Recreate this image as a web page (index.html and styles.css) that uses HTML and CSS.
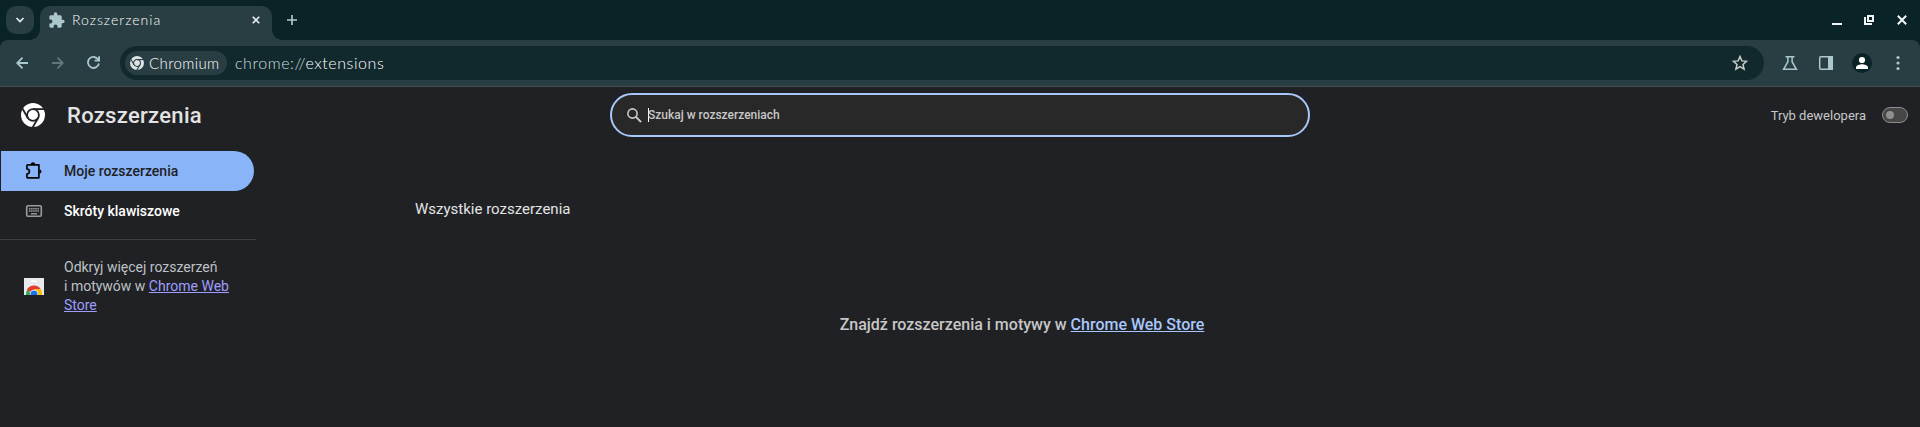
FILE: index.html
```html
<!DOCTYPE html>
<html lang="pl">
<head>
<meta charset="utf-8">
<title>Rozszerzenia</title>
<link rel="stylesheet" href="styles.css">
</head>
<body>
<svg width="0" height="0" class="defs">
  <symbol id="chromium" viewBox="0 0 24 24">
    <circle cx="12" cy="12" r="12" fill="currentColor"/>
    <circle cx="12" cy="12" r="5.9" fill="none" stroke="var(--gap)" stroke-width="1.8"/>
    <g stroke="var(--gap)" stroke-width="1.8" fill="none"><path d="M12 6.1H23.5"/><path d="M6.9 15L1.1 5"/><path d="M17.1 15L11.3 25"/></g>
  </symbol>
</svg>
<header class="tabstrip">
  <button class="tab-search"><svg width="10" height="10" viewBox="0 0 10 10"><path d="M1.500 3L5 6.500L8.500 3" fill="none" stroke="#e4ecec" stroke-width="1.700"/></svg></button>
  <div class="tab">
    <svg width="16" height="16" viewBox="1.500 0.500 22 22"><path d="M20.500 11H19V7c0-1.100-.9-2-2-2h-4V3.500a2.500 2.500 0 0 0-5 0V5H4c-1.100 0-2 .9-2 2v3.800h1.500a2.700 2.700 0 0 1 0 5.400H2V20c0 1.100.9 2 2 2h3.800v-1.500a2.700 2.700 0 0 1 5.400 0V22H17c1.100 0 2-.9 2-2v-4h1.500a2.500 2.500 0 0 0 0-5z" fill="#a9c7cc"/></svg>
    <span class="tab-title">Rozszerzenia</span>
    <svg class="tab-close" width="8" height="8" viewBox="0 0 8 8"><path d="M.7.7l6.600 6.600M7.300.7L.7 7.300" stroke="#e4ecec" stroke-width="1.600"/></svg>
  </div>
  <svg class="plus" width="10" height="10" viewBox="0 0 10 10"><path d="M5 0v10M0 5h10" stroke="#b6cbce" stroke-width="1.600"/></svg>
  <div class="window-controls">
    <svg width="10" height="10" viewBox="0 0 10 10"><path d="M0 9h10" stroke="#f1f5f5" stroke-width="2"/></svg>
    <svg width="10" height="10" viewBox="0 0 10 10"><path d="M4 1h5v5H4zM1 2v7h7" fill="none" stroke="#f1f5f5" stroke-width="2"/></svg>
    <svg width="10" height="10" viewBox="0 0 10 10"><path d="M.8.8l8.400 8.400M9.200.8L.8 9.200" stroke="#f1f5f5" stroke-width="2"/></svg>
  </div>
</header>
<div class="toolbar">
  <div class="nav-buttons">
    <svg width="12" height="12" viewBox="0 0 12 12"><path d="M12 6H1.200M6.500.7L1.200 6l5.300 5.300" fill="none" stroke="#a9c7cc" stroke-width="1.800"/></svg>
    <svg width="12" height="12" viewBox="0 0 12 12"><path d="M0 6h10.800M5.500.7L10.800 6l-5.300 5.300" fill="none" stroke="#657679" stroke-width="1.800"/></svg>
    <svg width="13" height="13" viewBox="0 0 13 13"><path d="M11.200 3.600A5.500 5.500 0 1 0 11.900 7.500M12.100 .3V4.700H7.600" fill="none" stroke="#a9c7cc" stroke-width="1.800"/></svg>
  </div>
  <div class="omnibox">
    <div class="chip"><svg class="chip-logo" width="14" height="14"><use href="#chromium"/></svg><span>Chromium</span></div>
    <div class="url"><span>chrome://</span>extensions</div>
    <svg class="star" width="16" height="16" viewBox="0 0 16 16"><path d="M8 1.500l1.850 4.400 4.750.4-3.600 3.100 1.100 4.700L8 11.600l-4.100 2.500L5 9.400 1.400 6.300l4.750-.4z" fill="none" stroke="#c9cecc" stroke-width="1.500"/></svg>
  </div>
  <div class="actions">
    <svg width="16" height="16" viewBox="0 0 16 16"><path d="M3.500 1.700h9M5.900 1.700v5L1.600 14.300h12.800L10.100 6.700v-5" fill="none" stroke="#a9c7cc" stroke-width="1.500"/></svg>
    <svg width="16" height="16" viewBox="0 0 16 16"><rect x="1.700" y="1.700" width="12.600" height="12.600" rx="1" fill="none" stroke="#a9c7cc" stroke-width="1.500"/><path d="M10 1h5v14h-5z" fill="#a9c7cc"/></svg>
    <svg width="20" height="20" viewBox="0 0 20 20"><circle cx="10" cy="10" r="10" fill="#0a2327"/><circle cx="10" cy="7" r="3.100" fill="#fff"/><path d="M4 16v-1.500c0-2.200 4-3.300 6-3.300s6 1.100 6 3.300V16z" fill="#fff"/></svg>
    <svg width="4" height="16" viewBox="0 0 4 16"><g fill="#a9c7cc"><circle cx="2" cy="2.500" r="1.600"/><circle cx="2" cy="8" r="1.600"/><circle cx="2" cy="13.500" r="1.600"/></g></svg>
  </div>
</div>
<div class="page">
  <div class="topbar">
    <svg class="logo" width="24" height="24"><use href="#chromium"/></svg>
    <h1>Rozszerzenia</h1>
    <div class="search">
      <svg width="15" height="15" viewBox="0 0 15 15"><circle cx="5.500" cy="5.500" r="4.600" fill="none" stroke="#c8c8c8" stroke-width="1.600"/><path d="M8.800 8.800l5.300 5.300" stroke="#c8c8c8" stroke-width="2"/></svg>
      <span class="caret"></span><span class="placeholder">Szukaj w rozszerzeniach</span>
    </div>
    <div class="dev"><span>Tryb dewelopera</span><span class="toggle"></span></div>
  </div>
  <div class="body">
    <nav class="sidebar">
      <a class="item active"><svg width="18" height="18" viewBox="0 0 18 18"><path d="M2.900 2.800h11v13h-11q-1 0-1-1v-2.700q2.500-.4 2.500-2.600T1.900 6.900V3.800q0-1 1-1z" fill="none" stroke="#050505" stroke-width="1.700" stroke-linejoin="round"/><path d="M5.800 2.500a2.200 2.200 0 0 1 4.400 0zM14.500 7.500a2 2 0 0 1 0 4z"/></svg><span>Moje rozszerzenia</span></a>
      <a class="item"><svg width="18" height="18" viewBox="0 0 18 18"><rect x="1.700" y="3.700" width="14.600" height="10.600" rx="1.300" fill="none" stroke="#9a9da0" stroke-width="1.600"/><path d="M4 6.700h10M4 9h10" stroke="#9a9da0" stroke-width="1.500" stroke-dasharray="1.500 .6"/><path d="M6 11.800h6" stroke="#9a9da0" stroke-width="1.400"/></svg><span>Skróty klawiszowe</span></a>
      <div class="promo">
        <svg width="20" height="17" viewBox="0 0 20 17"><path d="M0 0h20v17H0z" fill="#e8eaed"/><rect x="7" y="2.500" width="6" height="1.500" rx=".7" fill="#fff"/><path d="M2 17a8 9.500 0 0 1 2-6.500L7 17z" fill="#34a853"/><path d="M3 11.500A8.200 8.200 0 0 1 17 11.500H10L7 14.500z" fill="#e33b2e"/><path d="M10 11.300h7a9 9 0 0 1 1 5.700h-6z" fill="#fbbc04"/><circle cx="10" cy="16" r="4.200" fill="#fff"/><circle cx="10" cy="16" r="3.500" fill="#1a73e8"/></svg>
        <p>Odkryj więcej rozszerzeń<br>i motywów w <a>Chrome Web<br>Store</a></p>
      </div>
    </nav>
    <main>
      <h2>Wszystkie rozszerzenia</h2>
      <p class="empty">Znajdź rozszerzenia i motywy w <a>Chrome Web Store</a></p>
    </main>
  </div>
</div>
</body>
</html>
```
FILE: styles.css
```css
* { box-sizing: border-box; }
html { background: linear-gradient(#0a2327 60px, #202124 60px); }
body { margin: 0; height: 427px; overflow: hidden; font-family: Roboto, sans-serif; }
svg { display: block; flex: none; }
.defs { position: absolute; }
h1, h2, p { margin: 0; }

.tabstrip { display: flex; height: 40px; padding: 6px 13px 0 6px; background: #0a2327; font-family: Lato, sans-serif; }
.tab-search { display: flex; align-items: center; justify-content: center; width: 28px; height: 28px; padding: 0; border: 0; border-radius: 10px; background: #283e42; }
.tab { position: relative; display: flex; align-items: center; width: 232px; height: 34px; margin-left: 6px; padding: 0 12px 6px 9px; border-radius: 10px 10px 0 0; background: #283e42; }
.tab::before, .tab::after { content: ""; position: absolute; bottom: 0; width: 10px; height: 10px; }
.tab::before { left: -10px; background: radial-gradient(circle at 0 0, transparent 9.5px, #283e42 10px); }
.tab::after { right: -10px; background: radial-gradient(circle at 100% 0, transparent 9.5px, #283e42 10px); }
.tab-title { margin-left: 7px; color: #fff; font-size: 14px; font-weight: 300; letter-spacing: 1px; line-height: 16px; white-space: nowrap; }
.tab-close { margin-left: auto; }
.plus { margin: 9px 0 0 15px; }
.window-controls { display: flex; gap: 22px; margin: 9px 0 0 auto; }
.window-controls svg:last-child { margin-left: 1px; }

.toolbar { display: flex; align-items: center; height: 47px; padding: 0 20px 1px 16px; border-bottom: 1px solid #434c4f; border-radius: 8px 8px 0 0; background: #283e42; font-family: Lato, sans-serif; }
.nav-buttons { display: flex; align-items: center; gap: 24px; width: 104px; }
.nav-buttons svg:last-child { margin-left: -1px; }
.omnibox { display: flex; align-items: center; flex: 1; height: 34px; padding: 0 16px 0 5px; border-radius: 17px; background: #11292d; }
.chip { display: flex; align-items: center; width: 102px; height: 24px; padding-left: 5px; border-radius: 12px; background: #283e42; color: #fff; font-size: 15px; font-weight: 300; letter-spacing: .4px; }
.chip span { margin-left: 5px; }
.chip-logo { color: #dce3e3; --gap: #283e42; }
.url { margin-left: 8px; color: #fff; font-size: 16px; font-weight: 300; letter-spacing: .56px; white-space: nowrap; }
.url span { color: #cfdedf; }
.star { margin-left: auto; }
.actions { display: flex; align-items: center; gap: 20px; margin-left: 18px; }
.actions svg:nth-child(3) { margin-left: -2px; }
.actions svg:nth-child(4) { margin-left: 4px; }

.page { height: 340px; background: #202124; }
.topbar { display: grid; grid-template-columns: 67px 543px 700px 1fr; align-items: center; height: 56px; }
.logo { margin: 0 0 1px 21px; color: #fff; --gap: #202124; }
h1 { padding-top: 1px; color: #e3e3e3; font-size: 22px; font-weight: 500; letter-spacing: .3px; line-height: 28px; }
.search { display: flex; align-items: center; height: 44px; padding-left: 15px; border: 2px solid #a8c7fa; border-radius: 22px; background: #282828; color: #c7c7c7; font-size: 12px; font-weight: 500; }
.caret { width: 1px; height: 14px; margin-left: 6px; background: #fff; }
.placeholder { margin-left: -1px; }
.dev { display: flex; align-items: center; justify-content: flex-end; padding-right: 12px; color: #c7c7c7; font-size: 13px; }
.toggle { display: flex; align-items: center; width: 26px; height: 16px; margin-left: 16px; padding-left: 3px; border: 1px solid #8d8d8d; border-radius: 8px; background: #474747; }
.toggle::before { content: ""; width: 8px; height: 8px; border-radius: 50%; background: #8f8f8f; }
.body { display: flex; }
.sidebar { width: 256px; padding-top: 8px; }
.item { display: flex; align-items: center; width: 253px; height: 40px; margin-left: 1px; padding-left: 24px; border-radius: 0 20px 20px 0; color: #fff; font-size: 14px; font-weight: 500; }
.item span { margin-left: 21px; }
.item.active { background: #8ab4f8; color: #202124; }
.promo { display: flex; align-items: center; margin-top: 8px; padding: 18px 0 0 24px; border-top: 1px solid #3c4043; color: #bdc1c6; font-size: 14px; line-height: 19px; }
.promo p { margin-left: 20px; }
.promo a { color: #9e9eff; text-decoration: underline; }
main { flex: 1; padding: 54px 0 0 159px; }
h2 { color: #e3e3e3; font-size: 15px; font-weight: 400; line-height: 24px; }
.empty { margin: 92px 0 0 -33px; width: 1280px; text-align: center; color: #c7c7c7; font-size: 16px; font-weight: 500; line-height: 24px; }
.empty a { color: #a8c7fa; text-decoration: underline; }
```
